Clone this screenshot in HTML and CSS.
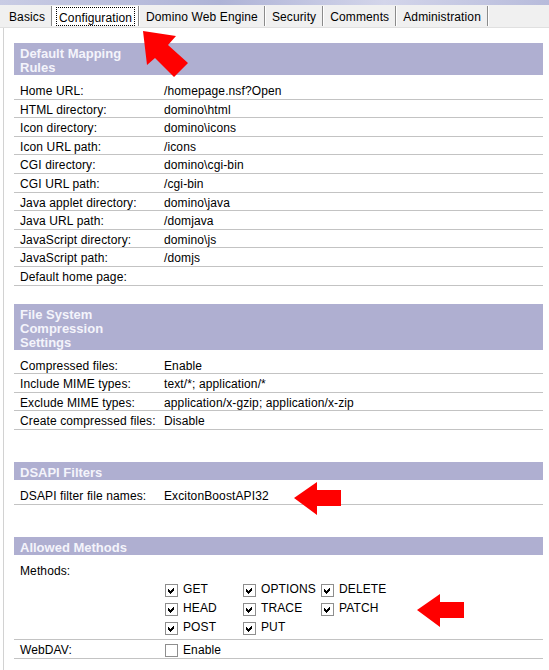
FILE: index.html
```html
<!DOCTYPE html>
<html lang="en">
<head>
  <meta charset="UTF-8" />
  <title>Server Document - Internet Protocols</title>
  <link rel="stylesheet" href="styles.css">
</head>
<body>
  <div class="wallpaper"></div>

  <div class="tabs">
    <div class="tab">Basics</div>
    <div class="tab active"><span>Configuration</span></div>
    <div class="tab">Domino Web Engine</div>
    <div class="tab">Security</div>
    <div class="tab">Comments</div>
    <div class="tab">Administration</div>
  </div>

  <div class="page">
    <section class="group">
      <h2 class="group-title"><span>Default Mapping Rules</span></h2>
      <div class="row"><span class="label">Home URL:</span><span>/homepage.nsf?Open</span></div>
      <div class="row"><span class="label">HTML directory:</span><span>domino\html</span></div>
      <div class="row"><span class="label">Icon directory:</span><span>domino\icons</span></div>
      <div class="row"><span class="label">Icon URL path:</span><span>/icons</span></div>
      <div class="row"><span class="label">CGI directory:</span><span>domino\cgi-bin</span></div>
      <div class="row"><span class="label">CGI URL path:</span><span>/cgi-bin</span></div>
      <div class="row"><span class="label">Java applet directory:</span><span>domino\java</span></div>
      <div class="row"><span class="label">Java URL path:</span><span>/domjava</span></div>
      <div class="row"><span class="label">JavaScript directory:</span><span>domino\js</span></div>
      <div class="row"><span class="label">JavaScript path:</span><span>/domjs</span></div>
      <div class="row"><span class="label">Default home page:</span><span></span></div>
    </section>

    <section class="group near">
      <h2 class="group-title"><span>File System Compression Settings</span></h2>
      <div class="row"><span class="label">Compressed files:</span><span>Enable</span></div>
      <div class="row"><span class="label">Include MIME types:</span><span>text/*; application/*</span></div>
      <div class="row"><span class="label">Exclude MIME types:</span><span>application/x-gzip; application/x-zip</span></div>
      <div class="row"><span class="label">Create compressed files:</span><span>Disable</span></div>
    </section>

    <section class="group">
      <h2 class="group-title"><span>DSAPI Filters</span></h2>
      <div class="row"><span class="label">DSAPI filter file names:</span><span>ExcitonBoostAPI32</span></div>
    </section>

    <section class="group">
      <h2 class="group-title"><span>Allowed Methods</span></h2>
      <div class="row">
        <span class="label">Methods:</span>
        <div class="methods">
          <label class="check"><span class="box"><svg viewBox="0 0 11 11"><path d="M2 4L4 6L8 2L8 5L4 9L2 7Z"/></svg></span>GET</label>
          <label class="check"><span class="box"><svg viewBox="0 0 11 11"><path d="M2 4L4 6L8 2L8 5L4 9L2 7Z"/></svg></span>HEAD</label>
          <label class="check"><span class="box"><svg viewBox="0 0 11 11"><path d="M2 4L4 6L8 2L8 5L4 9L2 7Z"/></svg></span>POST</label>
          <label class="check"><span class="box"><svg viewBox="0 0 11 11"><path d="M2 4L4 6L8 2L8 5L4 9L2 7Z"/></svg></span>OPTIONS</label>
          <label class="check"><span class="box"><svg viewBox="0 0 11 11"><path d="M2 4L4 6L8 2L8 5L4 9L2 7Z"/></svg></span>TRACE</label>
          <label class="check"><span class="box"><svg viewBox="0 0 11 11"><path d="M2 4L4 6L8 2L8 5L4 9L2 7Z"/></svg></span>PUT</label>
          <label class="check"><span class="box"><svg viewBox="0 0 11 11"><path d="M2 4L4 6L8 2L8 5L4 9L2 7Z"/></svg></span>DELETE</label>
          <label class="check"><span class="box"><svg viewBox="0 0 11 11"><path d="M2 4L4 6L8 2L8 5L4 9L2 7Z"/></svg></span>PATCH</label>
        </div>
      </div>
      <div class="row">
        <span class="label">WebDAV:</span>
        <label class="check"><span class="box"></span>Enable</label>
      </div>
    </section>
  </div>

  <!-- red callouts drawn over the screenshot -->
  <svg class="marks" width="549" height="670" viewBox="0 0 549 670">
    <polygon points="143,31 176,36 168,45 188,63 174,77 155,58 147,65" />
    <polygon points="294,498 317,482 317,490 341,490 341,506 317,506 317,515" />
    <polygon points="417,610 440,594 440,602 464,602 464,618 440,618 440,627" />
  </svg>
</body>
</html>
```

FILE: styles.css
```css
* {
  box-sizing: border-box;
}

body {
  margin: 0;
  height: 670px;
  overflow: hidden;
  display: flex;
  flex-direction: column;
  font: 12px "Liberation Sans", Arial, sans-serif;
  letter-spacing: 0.12px;
  color: #000;
  background: #fff;
}

.wallpaper {
  height: 5px;
  background: linear-gradient(90deg, #c9cce4, #aeb3d6 40%, #d3d5ea 70%, #b7bbdb);
}

.tabs {
  display: flex;
  align-items: center;
  height: 23px;
  padding-left: 2px;
  background: #f0f0f0;
  border-bottom: 1px solid #e0e0e0;
}

.tab {
  height: 20px;
  line-height: 23px;
  padding: 0 6px 0 7px;
  border-right: 1px solid #8b8b8b;
  box-shadow: 1px 0 0 #fff;
  white-space: nowrap;
}

.tab.active {
  display: flex;
  align-items: center;
  padding: 0 3px 0 4px;
  background: #fff;
}

.tab.active span {
  line-height: 14px;
  padding: 3px 2px 0;
  border: 1px dotted #000;
}

.page {
  flex: 1;
  margin-left: 3px;
  border-left: 1px solid #d2d2d2;
  padding: 15px 6px 0 10px;
}

.group {
  margin-top: 32px;
}

.group:first-child {
  margin-top: 0;
}

.group.near {
  margin-top: 18px;
}

.group-title {
  margin: 0 0 6px;
  padding: 4px 6px 0;
  background: #afafd1;
  color: #f4f4fb;
  font-size: 13px;
  font-weight: bold;
  line-height: 14px;
  letter-spacing: 0;
}

.group-title span {
  display: block;
  max-width: 125px;
}

.row {
  display: grid;
  grid-template-columns: 150px 1fr;
  align-items: start;
  padding-top: 4px;
  line-height: 13.6px;
  border-bottom: 1px solid #c3c3c3;
}

.row .label {
  padding-left: 6px;
}

.methods {
  display: grid;
  grid-template-columns: repeat(3, 78px);
  grid-template-rows: repeat(3, 19px);
  grid-auto-flow: column;
  padding: 16px 0 1.5px;
}

.check {
  display: flex;
  align-items: center;
  gap: 5px;
}

.box {
  width: 13px;
  height: 13px;
  margin-left: 1px;
  border: 1px solid #8e8e8e;
  background: #fff;
}

.box svg {
  display: block;
  width: 11px;
  height: 11px;
  fill: #000;
  shape-rendering: crispEdges;
}

.marks {
  position: absolute;
  top: 0;
  left: 0;
  fill: #ff0000;
  pointer-events: none;
}
```
